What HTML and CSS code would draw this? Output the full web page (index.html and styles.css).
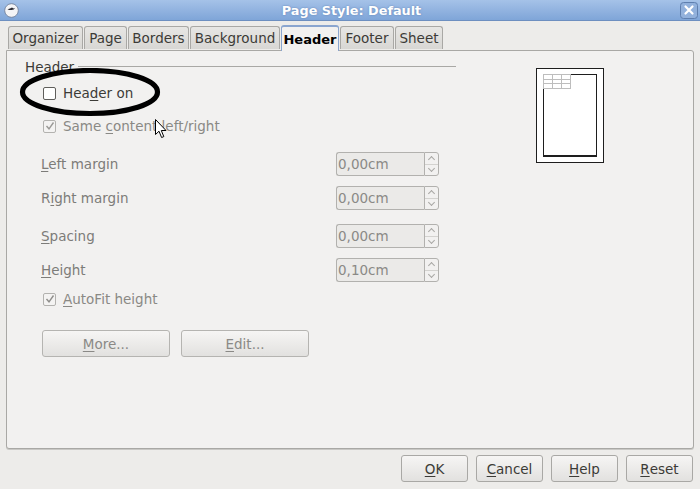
FILE: index.html
```html
<!DOCTYPE html>
<html>
<head>
<meta charset="utf-8">
<link rel="stylesheet" href="styles.css">
</head>
<body>
<div class="window">
  <div class="titlebar">
    <div class="app-icon">
      <svg width="15" height="15" viewBox="0 0 15 15"><circle cx="7.5" cy="7.5" r="6.8" fill="#f4f4f6" stroke="#6d7b93" stroke-width="0.8"/><path d="M3.5 6.2 L6 5.6 L8 4.6 L9.5 5.4 L11 5 L9.8 6.4 L7.5 7 L5.2 6.9 Z" fill="#2b2b33"/></svg>
    </div>
    <div class="title">Page Style: Default</div>
    <div class="close">
      <svg width="18" height="17" viewBox="0 0 18 17"><rect x="0.5" y="0.5" width="17" height="16" rx="3" fill="#92b1dc" stroke="#5f7fae"/><path d="M5.5 4.5 L12.5 11.5 M12.5 4.5 L5.5 11.5" stroke="#fff" stroke-width="2.2" stroke-linecap="round"/></svg>
    </div>
  </div>

  <div class="tabs">
    <div class="tab w-org">Organizer</div>
    <div class="tab w-page">Page</div>
    <div class="tab w-bord">Borders</div>
    <div class="tab w-bg">Background</div>
    <div class="tab active w-head">Header</div>
    <div class="tab w-foot">Footer</div>
    <div class="tab w-sheet">Sheet</div>
  </div>

  <div class="panel">
    <div class="form">
      <div class="frame-title"><span>Header</span><div class="rule"></div></div>

      <div class="row check-row r-on">
        <span class="cb"></span><span class="lbl dark">Hea<u>d</u>er on</span>
      </div>
      <div class="row check-row r-same">
        <span class="cb checked"><svg width="10" height="10" viewBox="0 0 10 10"><path d="M1.5 5 L4 7.8 L8.5 1.5" fill="none" stroke="#9a9996" stroke-width="1.4"/></svg></span><span class="lbl">Same <u>c</u>ontent left/right</span>
      </div>

      <div class="row field-row r-left">
        <span class="flabel"><u>L</u>eft margin</span>
        <div class="spin"><div class="spin-val">0,00cm</div><div class="spin-btns"><span class="up"></span><span class="down"></span></div></div>
      </div>
      <div class="row field-row r-right">
        <span class="flabel">R<u>i</u>ght margin</span>
        <div class="spin"><div class="spin-val">0,00cm</div><div class="spin-btns"><span class="up"></span><span class="down"></span></div></div>
      </div>
      <div class="row field-row r-spacing">
        <span class="flabel"><u>S</u>pacing</span>
        <div class="spin"><div class="spin-val">0,00cm</div><div class="spin-btns"><span class="up"></span><span class="down"></span></div></div>
      </div>
      <div class="row field-row r-height">
        <span class="flabel"><u>H</u>eight</span>
        <div class="spin"><div class="spin-val">0,10cm</div><div class="spin-btns"><span class="up"></span><span class="down"></span></div></div>
      </div>

      <div class="row check-row r-auto">
        <span class="cb checked"><svg width="10" height="10" viewBox="0 0 10 10"><path d="M1.5 5 L4 7.8 L8.5 1.5" fill="none" stroke="#8f8e8b" stroke-width="1.4"/></svg></span><span class="lbl"><u>A</u>utoFit height</span>
      </div>

      <div class="row btn-row">
        <div class="btn disabled"><u>M</u>ore...</div>
        <div class="btn disabled"><u>E</u>dit...</div>
      </div>
    </div>

    <div class="preview">
      <div class="page-outer">
        <div class="page-inner">
          <div class="hgrid">
            <span></span><span></span><span></span>
            <span></span><span></span><span></span>
            <span></span><span></span><span></span>
          </div>
        </div>
      </div>
    </div>
  </div>

  <div class="footer">
    <div class="btn"><u>O</u>K</div>
    <div class="btn"><u>C</u>ancel</div>
    <div class="btn"><u>H</u>elp</div>
    <div class="btn"><u>R</u>eset</div>
  </div>

  <svg class="ellipse" width="146" height="52" viewBox="0 0 146 52"><ellipse cx="72" cy="24" rx="67.5" ry="21.5" fill="none" stroke="#000" stroke-width="5.2"/></svg>
  <svg class="cursor" width="12" height="20" viewBox="0 0 12 20"><path d="M0.5 0.5 L0.5 15.5 L4 12.2 L6.6 18.5 L8.8 17.6 L6.3 11.5 L11 11.5 Z" fill="#fff" stroke="#000" stroke-width="1" stroke-linejoin="round"/></svg>
</div>
</body>
</html>
```

FILE: styles.css
```css
* { box-sizing: border-box; }
html, body { margin: 0; padding: 0; }
body {
  width: 700px;
  height: 489px;
  overflow: hidden;
  background: #edecea;
  font-family: "DejaVu Sans", sans-serif;
  font-size: 13.5px;
  color: #3c3b37;
}
u { text-decoration: underline; text-underline-offset: 2px; }

.window { position: relative; width: 700px; height: 489px; }

.titlebar {
  height: 21px;
  display: flex;
  align-items: center;
  background: linear-gradient(#a5c2e8, #7fa5d8);
  border-bottom: 1px solid #6d8fc0;
  padding: 0 2px 0 4px;
}
.app-icon { width: 15px; height: 15px; display: flex; }
.title {
  flex: 1;
  text-align: center;
  color: #fff;
  font-weight: bold;
  font-size: 12.8px;
  text-shadow: 0 0 2px #5d7fb1;
  padding-left: 4px;
}
.close { width: 18px; height: 17px; display: flex; }

.tabs {
  display: flex;
  align-items: flex-end;
  height: 29px;
  padding-left: 8px;
  position: relative;
  z-index: 2;
}
.tab {
  height: 23px;
  margin-right: 1px;
  border: 1px solid #a9a8a5;
  border-bottom: none;
  border-radius: 3px 3px 0 0;
  background: linear-gradient(#e7e6e4, #d8d7d4);
  display: flex;
  align-items: center;
  justify-content: center;
  color: #3c3b37;
  font-size: 13.5px;
  margin-bottom: 1px;
}
.tab.active {
  height: 26px;
  margin-bottom: -1px;
  background: #f2f1f0;
  border-color: #8aa5cf;
  border-top: 2px solid #8aa5cf;
  font-weight: bold;
  color: #000;
  font-size: 13px;
}
.w-org { width: 75px; }
.w-page { width: 43px; }
.w-bord { width: 61px; }
.w-bg { width: 90px; }
.w-head { width: 58px; }
.w-foot { width: 54px; }
.w-sheet { width: 48px; }

.panel {
  margin: 0 6px 0 6px;
  height: 399px;
  background: #f2f1f0;
  border: 1px solid #a9a8a5;
  border-radius: 0 3px 3px 3px;
  box-shadow: 0 1px 0 #c9c8c5;
  display: flex;
  position: relative;
  z-index: 1;
}
.form {
  width: 449px;
  padding-top: 7px;
  display: flex;
  flex-direction: column;
}
.frame-title {
  height: 18px;
  display: flex;
  align-items: center;
  padding-left: 18px;
  color: #3c3b37;
}
.frame-title span { padding-right: 4px; }
.rule { flex: 1; height: 0; border-top: 1px solid #a9a8a5; margin-top: -1px; }

.row { display: flex; align-items: center; }
.check-row { height: 20px; padding-left: 36px; color: #8a8985; }
.lbl { margin-left: 7px; }
.lbl.dark { color: #3c3b37; }
.cb {
  width: 13px; height: 13px;
  border: 1px solid #8a8986;
  border-radius: 2px;
  background: #fff;
  display: flex; align-items: center; justify-content: center;
}
.cb.checked { border-color: #b3b2af; background: #f4f3f2; }
.r-on { margin-top: 7px; }
.r-on .cb { border-color: #5f5e5b; }
.r-same { margin-top: 13px; }
.r-auto { margin-top: 7px; }

.field-row { height: 24px; padding-left: 34px; color: #7d7c79; }
.flabel { width: 295px; }
.r-left { margin-top: 16px; }
.r-right { margin-top: 10px; }
.r-spacing { margin-top: 14px; }
.r-height { margin-top: 10px; }

.spin { display: flex; height: 24px; }
.spin-val {
  width: 88px;
  border: 1px solid #b2b1ae;
  border-right: none;
  border-radius: 3px 0 0 3px;
  background: #ebeae8;
  color: #8a8986;
  padding-left: 1px;
  display: flex; align-items: center;
  font-size: 13.5px;
}
.spin-btns {
  width: 15px;
  border: 1px solid #b2b1ae;
  border-radius: 0 3px 3px 0;
  background: #f2f1f0;
  display: flex; flex-direction: column;
}
.spin-btns span { flex: 1; position: relative; }
.spin-btns .up { border-bottom: 1px solid #d3d2cf; }
.spin-btns .up::after, .spin-btns .down::after {
  content: "";
  position: absolute;
  left: 4px;
  width: 4px; height: 4px;
  border-left: 1px solid #a8a7a4;
  border-top: 1px solid #a8a7a4;
}
.spin-btns .up::after { top: 4px; transform: rotate(45deg); }
.spin-btns .down::after { top: 1px; transform: rotate(225deg); }

.btn-row { margin-top: 21px; padding-left: 35px; gap: 11px; }
.btn {
  width: 128px;
  height: 27px;
  border: 1px solid #a9a8a5;
  border-radius: 3px;
  background: linear-gradient(#f6f5f4, #e2e1df);
  display: flex; align-items: center; justify-content: center;
  color: #3c3b37;
  font-size: 13.5px;
}
.btn.disabled { color: #8a8986; border-color: #b5b4b1; }

.preview { flex: 1; padding: 17px 0 0 80px; }
.page-outer {
  width: 68px; height: 95px;
  border: 1px solid #1e1e1e;
  background: #fff;
  padding: 5px 6px 5px 6px;
}
.page-inner {
  width: 54px; height: 83px;
  border: 1px solid #1e1e1e;
  border-bottom-width: 2px;
  position: relative;
}
.hgrid {
  position: absolute; left: -1px; top: -1px;
  width: 28px; height: 15px;
  display: grid;
  grid-template-columns: repeat(3, 1fr);
  grid-template-rows: repeat(3, 1fr);
  border-right: 1px solid #bdbdbd;
  border-bottom: 1px solid #bdbdbd;
  background: #fff;
}
.hgrid span { border-left: 1px solid #bdbdbd; border-top: 1px solid #bdbdbd; }

.footer {
  display: flex;
  justify-content: flex-end;
  gap: 8px;
  padding: 6px 7px 0 0;
}
.footer .btn { width: 67px; height: 27px; }

.ellipse { position: absolute; left: 18px; top: 68px; z-index: 10; }
.cursor { position: absolute; left: 155px; top: 119px; z-index: 11; }
```
